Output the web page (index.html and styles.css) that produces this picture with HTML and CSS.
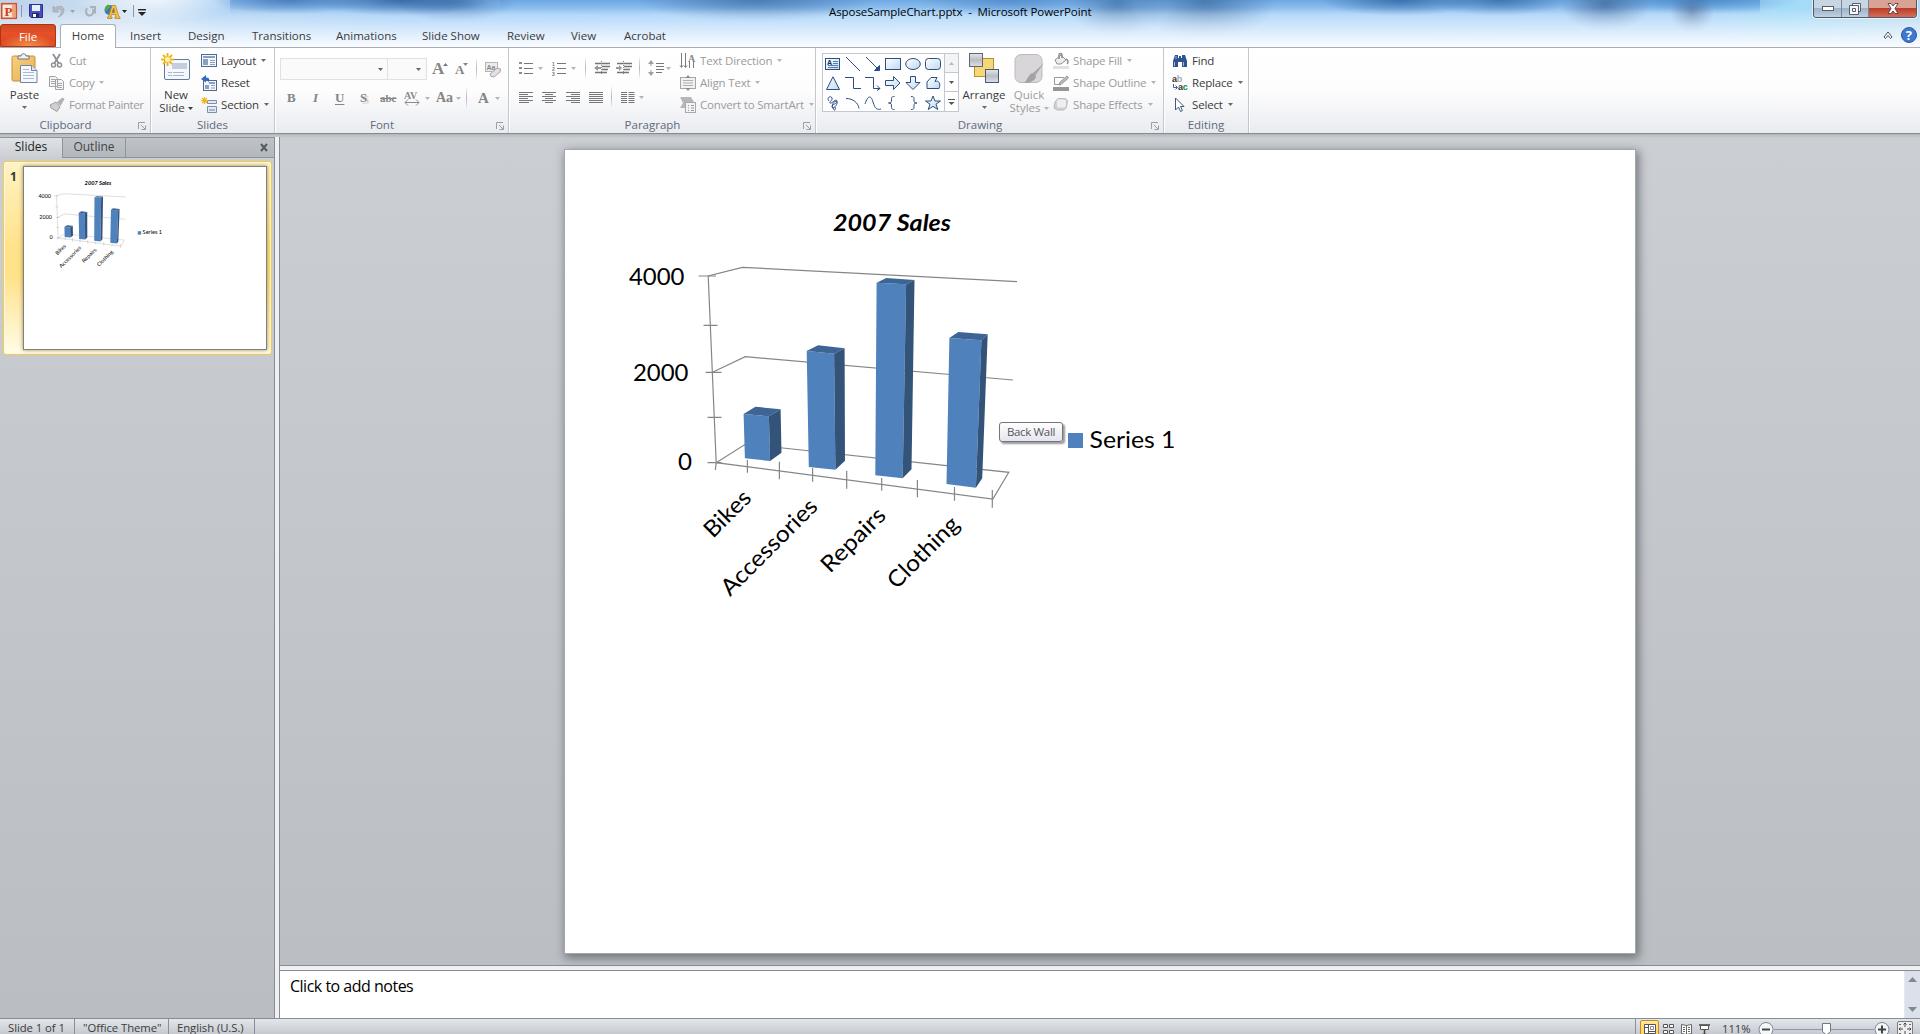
FILE: index.html
```html
<!DOCTYPE html>
<html lang="en">
<head>
<meta charset="utf-8">
<title>AsposeSampleChart.pptx - Microsoft PowerPoint</title>
<link rel="stylesheet" href="styles.css">
</head>
<body>
<svg class="defs" width="0" height="0">
  <defs>
    <linearGradient id="shape" x1="0" y1="0" x2="1" y2="1"><stop offset="0" stop-color="#fff"/><stop offset="1" stop-color="#bcd9f0"/></linearGradient>
    <linearGradient id="grey" x1="0" y1="0" x2="0" y2="1"><stop offset="0" stop-color="#e4e6ea"/><stop offset=".5" stop-color="#b9bec6"/><stop offset="1" stop-color="#dcdfe4"/></linearGradient>
    <linearGradient id="gold" x1="0" y1="0" x2="1" y2="1"><stop offset="0" stop-color="#f7cf82"/><stop offset="1" stop-color="#e8b04c"/></linearGradient>
    <symbol id="caret" viewBox="0 0 5 3"><path d="M0 0h5L2.500 3z" fill="currentColor"/></symbol>
    <symbol id="launch" viewBox="0 0 8 8"><path d="M.5 7V.5H7M3 3l4 4M7.500 3.500v4h-4" fill="none" stroke="#9a9ea6"/></symbol>
    <symbol id="chart" viewBox="565 150 1070 803">
      <g fill="none" stroke="#868686" stroke-width="1.200">
        <path d="M1017 281.700 742.300 267.300 708.200 276 716.200 462.700 992.800 499l16-26.700L745.700 444l-29.500 18.700M1013 380 745.300 356.700l-32.800 15.600M715.400 470l.8-8"/>
        <path d="M698.500 276H716M703.500 325.300h14M705.500 372.300h16M707.500 417.300h14M707.500 462.700h14"/>
        <path d="M747.400 460v12.700M779.400 461.700v17.600M812.600 468v13.700M846.700 470.700v18M881.700 478v12.700M917.400 480v17.300M954.500 487v13.700M992.300 490v17.700"/>
      </g>
      <g fill="#4f81bd">
        <path d="M743.600 414l25.300 2.300 1.200 44.700-25.200-2.700zM806.700 351l27.400 2.700 1.300 116-26.600-2.700zM876.600 282.700l29.500 1.600-3.400 194-27.400-3zM949.400 338l32 2.300-5.500 147.400-29.400-3.700z"/>
      </g>
      <g fill="#3c6494">
        <path d="M743.600 414l11.800-7.300 25.200 2.600-11.700 7zM806.700 351l11.400-5.700 26.500 3-10.500 5.400zM876.600 282.700l9.700-4.700 28.200 2-8.400 4.300zM949.400 338l8.900-6 29.400 2.300-6.300 6z"/>
      </g>
      <g fill="#335379">
        <path d="M768.900 416.300l11.700-7 .9 43.400-11.400 8.300zM834.100 353.700l10.500-5.400.4 112.400-9.600 9zM906.100 284.300l8.400-4.300-3 189.300-8.800 9zM981.400 340.300l6.300-6-5.500 144-6.300 9.400z"/>
      </g>
      <path d="M1068 433h15v15h-15z" fill="#4f81bd"/>
      <g class="chart-text">
        <text class="chart-title" x="833" y="230.500" textLength="118" lengthAdjust="spacingAndGlyphs">2007 Sales</text>
        <text x="629" y="284.500" textLength="55.500" lengthAdjust="spacingAndGlyphs">4000</text>
        <text x="633" y="380.500" textLength="55.500" lengthAdjust="spacingAndGlyphs">2000</text>
        <text x="678" y="469.500" textLength="14" lengthAdjust="spacingAndGlyphs">0</text>
        <text x="1089.500" y="447.500" textLength="86" lengthAdjust="spacingAndGlyphs">Series 1</text>
        <text transform="translate(713 539) rotate(-45)" textLength="56" lengthAdjust="spacingAndGlyphs">Bikes</text>
        <text transform="translate(730 597) rotate(-45)" textLength="126" lengthAdjust="spacingAndGlyphs">Accessories</text>
        <text transform="translate(830 574) rotate(-45)" textLength="81" lengthAdjust="spacingAndGlyphs">Repairs</text>
        <text transform="translate(896.500 590) rotate(-45)" textLength="91" lengthAdjust="spacingAndGlyphs">Clothing</text>
      </g>
    </symbol>
  </defs>
</svg>

<div class="app">
  <header class="titlebar">
    <div class="title-row">
      <div class="quick">
        <svg width="16" height="16" viewBox="0 0 16 16"><rect x=".7" y=".7" width="14.600" height="14.600" fill="#fbe9df" stroke="#d2502b" stroke-width="1.600"/><path d="M11 2h3v12h-3" fill="#f3a56f"/><text x="3.500" y="12.900" class="logo-letter">P</text></svg>
        <i class="qsep"></i>
        <svg class="save" width="14" height="14" viewBox="0 0 14 14"><path d="M.5.5h13v13H2L.5 12z" fill="#4a4fc0" stroke="#2a2f90"/><path d="M3 1h8v6H3z" fill="#e8f0fb"/><path d="M3 9h7v5H3z" fill="#23286f"/><path d="M4 10h3v3H4z" fill="#fff"/></svg>
        <svg class="undo" width="13" height="13" viewBox="0 0 13 13"><path d="M1 1v6h6L5 5c3-2 5 0 4 3-.5 2-2 3-3 4 4-1 6-4 6-7 0-4-5-5-9-2z" fill="#b4bac4" stroke="#9aa2af" stroke-width=".6"/></svg>
        <svg class="qcaret pale" width="5" height="3"><use href="#caret"/></svg>
        <svg class="redo" width="13" height="13" viewBox="0 0 13 13"><path d="M7 2h5v5l-1.700-1.500c.5 3-1.300 5-3.800 5C3 10.500 2 6 4 3" fill="none" stroke="#aab0b9" stroke-width="2"/></svg>
        <svg class="globe" width="17" height="15" viewBox="0 0 17 15"><circle cx="5.500" cy="6" r="5" fill="#3977bd"/><path d="M3 1c4-1 4 3 1 4L2 8 1 4z" fill="#54a944"/><path d="M8 1.500h3.500L15 13h1v1.500h-5V13h1l-.6-2.500H7.500L6.500 13H8v1.500H3.500V13h1zM8 8.500h3L9.700 4z" fill="#f5c242" stroke="#b27c1a" stroke-width=".7"/></svg>
        <svg class="qcaret dark" width="5" height="3"><use href="#caret"/></svg>
        <i class="qsep late"></i>
        <svg class="customize" width="8" height="7" viewBox="0 0 8 7"><path d="M0 .7h8" stroke="#222" stroke-width="1.400"/><path d="M0 3h8L4 7z" fill="#222"/></svg>
      </div>
      <div class="title">AsposeSampleChart.pptx&nbsp; -&nbsp; Microsoft PowerPoint</div>
      <div class="winbtns">
        <span><svg width="12" height="5"><rect x=".5" y=".5" width="11" height="4" fill="#fff" stroke="#565d6b"/></svg></span>
        <span class="max"><svg width="12" height="12" viewBox="0 0 12 12"><path d="M3.500.5h8v8h-2v3h-9v-9h3z" fill="#f7f8fa" stroke="#565d6b"/><path d="M3.500 5.500h3v3h-3zM2.500 2.500h7v7" fill="none" stroke="#565d6b"/></svg></span>
        <span class="close"><svg width="12" height="11" viewBox="0 0 12 11"><path d="M1 .5h3l2 2.500L8 .5h3L8 5.500l3 5H8L6 8l-2 2.500H1l3-5z" fill="#fff" stroke="#5c3a42" stroke-width=".9"/></svg></span>
      </div>
    </div>
    <nav class="tabs">
      <span class="file">File</span><span class="home">Home</span><span class="tab t-insert">Insert</span><span class="tab t-design">Design</span><span class="tab t-trans">Transitions</span><span class="tab t-anim">Animations</span><span class="tab t-show">Slide Show</span><span class="tab t-review">Review</span><span class="tab t-view">View</span><span class="tab t-acro">Acrobat</span>
      <span class="help"><svg width="10" height="8" viewBox="0 0 10 8"><path d="M1 6l4-5 4 5-1.500 1.500L5 4.500 2.500 7.500z" fill="#fff" stroke="#4a4f57"/></svg>
      <svg width="16" height="16" viewBox="0 0 16 16"><circle cx="8" cy="8" r="7.500" fill="#3f78cf" stroke="#2c59a4"/><text x="4.700" y="12.700" class="help-mark">?</text></svg></span>
    </nav>
  </header>

  <section class="ribbon">
    <div class="group g-clip">
      <div class="body">
        <div class="big paste">
          <svg width="28" height="31" viewBox="0 0 28 31"><rect x="1" y="3" width="23" height="25" rx="1.500" fill="url(#gold)" stroke="#c79035"/><path d="M7 6V3h3c0-3 5-3 5 0h3v3z" fill="#f0f2f5" stroke="#6f7680"/><path d="M9.500 12.500h11l5.500 5v12H9.500z" fill="#f6f8fc" stroke="#6d86a8"/><path d="M20.500 12.500v5H26" fill="#dbe4f0" stroke="#6d86a8"/><path d="M12 16.500h6M12 19.500h11M12 22.500h11M12 25.500h11" stroke="#a9bbd2"/></svg>
          <b>Paste</b><svg class="c" width="5" height="3"><use href="#caret"/></svg>
        </div>
        <div class="col off">
          <div class="cmd"><svg width="16" height="16" viewBox="0 0 16 16"><path d="M4 1l5.500 9M11 1L5.500 10" stroke="#8d9095" stroke-width="1.800"/><circle cx="4.500" cy="12" r="2" fill="none" stroke="#8d9095" stroke-width="1.500"/><circle cx="10.500" cy="12" r="2" fill="none" stroke="#8d9095" stroke-width="1.500"/></svg><b>Cut</b></div>
          <div class="cmd"><svg width="16" height="16" viewBox="0 0 16 16"><path d="M.5 1.500h6l2 2v8h-8zM6.500 4.500h6l2 2v8h-8z" fill="#f3f3f4" stroke="#a0a2a6"/><path d="M2 4.500h4M2 6.500h4M2 8.500h4M8 8.500h5M8 10.500h5M8 12.500h5" stroke="#a8aaae"/></svg><b>Copy</b><svg class="c" width="5" height="3"><use href="#caret"/></svg></div>
          <div class="cmd"><svg width="16" height="16" viewBox="0 0 16 16"><path d="M1 8l6-3 4 5-3 4.500L2 11z" fill="#cfcfd1" stroke="#9fa0a3"/><path d="M8 5l5.500-4.500L15.500 2l-4 7z" fill="#aeb0b3"/></svg><b>Format Painter</b></div>
        </div>
      </div>
      <div class="label with-launch">Clipboard<svg class="launch" width="8" height="8"><use href="#launch"/></svg></div>
    </div>

    <div class="group g-slides">
      <div class="body">
        <div class="big newslide">
          <svg width="30" height="31" viewBox="0 0 30 31"><rect x="3.500" y="6.500" width="25" height="20" rx="1.500" fill="#f5f8fc" stroke="#627c9f"/><path d="M11 10h15v6H11z" fill="#c4cedb"/><path d="M7 19.500h17M7 22.500h17" stroke="#a8b7cb" stroke-dasharray="4 1 11 1"/><path d="M6.500 0v13M0 6.500h13M2 2l9 9M11 2l-9 9" stroke="#f0b51c" stroke-width="2"/><circle cx="6.500" cy="6.500" r="2.500" fill="#fff7b0"/></svg>
          <b>New</b><b>Slide <svg width="5" height="3"><use href="#caret"/></svg></b>
        </div>
        <div class="col">
          <div class="cmd"><svg width="16" height="14" viewBox="0 0 16 14"><rect x=".5" y=".5" width="15" height="12" fill="#f3f6fa" stroke="#4c6a92"/><path d="M2 2h12v2H2zM2 5h5v6H2z" fill="#8aa0be"/><path d="M9 6.500h5M9 8.500h5M9 10.500h5" stroke="#8aa0be"/></svg><b>Layout</b><svg class="c" width="5" height="3"><use href="#caret"/></svg></div>
          <div class="cmd"><svg width="16" height="16" viewBox="0 0 16 16"><rect x="2.500" y="5.500" width="13" height="10" fill="#f3f6fa" stroke="#4c6a92"/><path d="M8 7h6v2H8zM4 10h4v4H4z" fill="#8aa0be"/><path d="M10 10.500h4M10 13h4" stroke="#8aa0be"/><path d="M0 4l5-4v2.500c4 0 4 3 2 5 .5-2-.5-2.500-2-2.500v2.500z" fill="#2d6bc4"/></svg><b>Reset</b></div>
          <div class="cmd"><svg width="16" height="16" viewBox="0 0 16 16"><path d="M6.500 3.500h9v3h-9zM6.500 9.500h9v6h-9z" fill="#e4eaf2" stroke="#7b90ad"/><path d="M8 12h6v2H8z" fill="#a9b9cd"/><path d="M3.500 0v7M0 3.500h7M1 1l5 5M6 1L1 6" stroke="#efb41c" stroke-width="1.200"/></svg><b>Section</b><svg class="c" width="5" height="3"><use href="#caret"/></svg></div>
        </div>
      </div>
      <div class="label">Slides</div>
    </div>

    <div class="group g-font">
      <div class="body rows">
        <div class="frow1">
          <span class="combo"><svg width="5" height="3"><use href="#caret"/></svg></span><span class="combo small"><svg width="5" height="3"><use href="#caret"/></svg></span>
          <span class="serif grow">A<svg width="5" height="3" viewBox="0 0 5 3"><path d="M0 3h5L2.500 0z" fill="#777"/></svg></span>
          <span class="serif shrink">A<svg width="5" height="3"><use href="#caret"/></svg></span>
          <i class="vs"></i>
          <svg width="17" height="17" viewBox="0 0 17 17"><rect x=".5" y="1.500" width="12" height="9" fill="#ececef" stroke="#b3b3ba"/><text x="1.500" y="9" class="mini">Aa</text><path d="M5 13l7-6 3.500 1-.5 3-6 5-3-.5z" fill="#e3dfe2" stroke="#a9a4aa"/></svg>
        </div>
        <div class="frow2">
          <span class="serif">B</span><span class="serif it">I</span><span class="serif un">U</span><span class="serif sh">S</span><span class="serif st">abc</span>
          <svg width="16" height="15" viewBox="0 0 16 15"><text x="0" y="8" class="av">AV</text><path d="M1 11.500h14M4 8.500l-3 3 3 3M12 8.500l3 3-3 3" fill="none" stroke="#8c8c8c"/></svg><svg class="c" width="5" height="3"><use href="#caret"/></svg>
          <span class="serif aa">Aa</span><svg class="c" width="5" height="3"><use href="#caret"/></svg><i class="vs"></i><span class="serif fc">A</span><svg class="c" width="5" height="3"><use href="#caret"/></svg>
        </div>
      </div>
      <div class="label with-launch">Font<svg class="launch" width="8" height="8"><use href="#launch"/></svg></div>
    </div>

    <div class="group g-para">
      <div class="body">
        <div class="rows para-left">
          <div class="prow1">
            <svg width="14" height="14" viewBox="0 0 14 14"><path d="M5 2.500h9M5 7.500h9M5 12.500h9" stroke="#777"/><path d="M0 1h3v2H0zM0 6h3v2H0zM0 11h3v2H0z" fill="#8d8d8d"/></svg><svg class="c" width="5" height="3"><use href="#caret"/></svg>
            <svg width="14" height="15" viewBox="0 0 14 15"><path d="M5 2.500h9M5 7.500h9M5 12.500h9" stroke="#777"/><text x="0" y="4.500" class="num">1</text><text x="0" y="9.500" class="num">2</text><text x="0" y="14.500" class="num">3</text></svg><svg class="c" width="5" height="3"><use href="#caret"/></svg><i class="vs"></i>
            <svg width="16" height="14" viewBox="0 0 16 14"><path d="M1 2.500h15M8 5.500h8M8 8.500h6M1 11.500h12" stroke="#757575" stroke-width="1.500"/><path d="M0 7l4-3v2h3v2H4v2z" fill="#999"/><path d="M7.500 0v14" stroke="#888" stroke-dasharray="1 1"/></svg>
            <svg width="16" height="14" viewBox="0 0 16 14"><path d="M1 2.500h15M8 5.500h8M8 8.500h6M1 11.500h12" stroke="#757575" stroke-width="1.500"/><path d="M6 7L3 4v2H0v2h3v2z" fill="#999"/><path d="M7.500 0v14" stroke="#888" stroke-dasharray="1 1"/></svg><i class="vs"></i>
            <svg width="16" height="16" viewBox="0 0 16 16"><path d="M3 1v5M3 10v5" stroke="#999"/><path d="M0 4l3-4 3 4zM0 12l3 4 3-4z" fill="#a0a0a0"/><path d="M8 3.500h8M8 6.500h8M8 9.500h8M8 12.500h6" stroke="#777"/></svg><svg class="c" width="5" height="3"><use href="#caret"/></svg>
          </div>
          <div class="prow2">
            <svg width="14" height="11" viewBox="0 0 14 11"><path d="M0 .5h14M0 2.500h9M0 4.500h14M0 6.500h9M0 8.500h14M0 10.500h10" stroke="#777"/></svg>
            <svg width="14" height="11" viewBox="0 0 14 11"><path d="M0 .5h14M3 2.500h8M0 4.500h14M3 6.500h8M0 8.500h14M3 10.500h8" stroke="#777"/></svg>
            <svg width="14" height="11" viewBox="0 0 14 11"><path d="M0 .5h14M5 2.500h9M0 4.500h14M5 6.500h9M0 8.500h14M5 10.500h9" stroke="#777"/></svg>
            <svg width="14" height="11" viewBox="0 0 14 11"><path d="M0 .5h14M0 2.500h14M0 4.500h14M0 6.500h14M0 8.500h14M0 10.500h14" stroke="#777"/></svg><i class="vs"></i>
            <svg width="13" height="11" viewBox="0 0 13 11"><path d="M0 .5h6M0 2.500h6M0 4.500h6M0 6.500h6M0 8.500h6M0 10.500h6M7.500.5h6M7.500 2.500h6M7.500 4.500h6M7.500 6.500h6M7.500 8.500h6M7.500 10.500h6" stroke="#777"/></svg><svg class="c" width="5" height="3"><use href="#caret"/></svg>
          </div>
        </div>
        <div class="col off">
          <div class="cmd"><svg width="16" height="16" viewBox="0 0 16 16"><path d="M1.500 0v14M5.500 0v14M9.500 8v7M13.500 8v7M0 12.500l1.500 2 1.500-2M4 12.500l1.500 2 1.500-2" stroke="#7b7b7b" fill="none"/><text x="8" y="8.500" class="av big-a">A</text></svg><b>Text Direction</b><svg class="c" width="5" height="3"><use href="#caret"/></svg></div>
          <div class="cmd"><svg width="16" height="16" viewBox="0 0 16 16"><rect x=".5" y="2.500" width="15" height="11" fill="#f1f1f2" stroke="#a6a6a8"/><path d="M3 5.500h10M3 8h10M3 10.500h10" stroke="#b0b0b2"/><path d="M5.500 3L8 0l2.500 3zM5.500 13L8 16l2.500-3z" fill="#8b8b8d"/></svg><b>Align Text</b><svg class="c" width="5" height="3"><use href="#caret"/></svg></div>
          <div class="cmd"><svg width="16" height="16" viewBox="0 0 16 16"><path d="M0 0h11l3 5-4 6H0l3-5z" fill="#b6b6b9"/><rect x="5.500" y="5.500" width="10" height="10" fill="#f3f3f4" stroke="#a9a9ac"/><path d="M8 8.500h1M11 8.500h3M8 11h1M11 11h3M8 13.500h1M11 13.500h3" stroke="#98989b"/></svg><b>Convert to SmartArt</b><svg class="c" width="5" height="3"><use href="#caret"/></svg></div>
        </div>
      </div>
      <div class="label with-launch">Paragraph<svg class="launch" width="8" height="8"><use href="#launch"/></svg></div>
    </div>

    <div class="group g-draw">
      <div class="body">
        <div class="gallery">
          <div class="shapes">
            <svg viewBox="0 0 16 14"><rect x=".5" y="1.500" width="14" height="11" fill="url(#shape)" stroke="#2c4d82"/><text x="2" y="8" class="tb">A</text><path d="M8 4.500h5M8 6.500h5M3 8.500h10M3 10.500h10" stroke="#5c7cab"/></svg>
            <svg viewBox="0 0 16 14"><path d="M1 0l14 14"/></svg>
            <svg viewBox="0 0 16 14"><path d="M1 0l13 13M14.500 8.500v5h-5z" fill="#2c4d82"/></svg>
            <svg viewBox="0 0 16 14"><rect x=".5" y="1.500" width="15" height="11" fill="url(#shape)"/></svg>
            <svg viewBox="0 0 16 14"><ellipse cx="8" cy="7" rx="7.300" ry="5.500" fill="url(#shape)"/></svg>
            <svg viewBox="0 0 16 14"><rect x=".5" y="1.500" width="15" height="11" rx="3" fill="url(#shape)"/></svg>
            <svg viewBox="0 0 16 14"><path d="M8 .8l6.500 12.700h-13z" fill="url(#shape)"/></svg>
            <svg viewBox="0 0 16 14"><path d="M0 1.500h8.500v11H16"/></svg>
            <svg viewBox="0 0 16 14"><path d="M0 1.500h8.500v11H15M12 9.500l3 3-3 2"/></svg>
            <svg viewBox="0 0 16 14"><path d="M.5 4.500h8v-4l6.500 6.500-6.500 6.500v-4h-8z" fill="url(#shape)"/></svg>
            <svg viewBox="0 0 16 14"><path d="M5.500.5h5v6H15l-7 7-7-7h4.500z" fill="url(#shape)"/></svg>
            <svg viewBox="0 0 16 14"><path d="M2 12.500V6l4-4.500h6L10 5.500c4-1.500 6 2 4 7z" fill="url(#shape)"/></svg>
            <svg viewBox="0 0 16 14"><path d="M4 5C1 2 6-1 7 2S3 6 5 7s6-5 7-2-6 3-5 6 6-3 5-5-6 1-4 6 3 0 2-1"/></svg>
            <svg viewBox="0 0 16 14"><path d="M1 2.500c7 0 12 4 13 10"/></svg>
            <svg viewBox="0 0 16 14"><path d="M0 8C3-1 6-1 8 6s4 8 8 7"/></svg>
            <svg viewBox="0 0 16 14"><path d="M9.500.5c-3 0-3 1-3 3.500S6 7 3.500 7C6 7 6.500 7.500 6.500 10s0 3.500 3 3.500"/></svg>
            <svg viewBox="0 0 16 14"><path d="M6 .5c3 0 3 1 3 3.500S9.500 7 12 7C9.500 7 9 7.500 9 10s0 3.500-3 3.500"/></svg>
            <svg viewBox="0 0 16 14"><path d="M8 0l2 5h5.500L11 8.200l1.800 5.300L8 10.400l-4.800 3.100L5 8.200.5 5H6z" fill="url(#shape)"/></svg>
          </div>
          <div class="gbtns"><span class="dim"><svg width="5" height="3" viewBox="0 0 5 3"><path d="M0 3h5L2.500 0z" fill="#b5bac1"/></svg></span><span><svg width="5" height="3"><use href="#caret"/></svg></span><span><svg width="7" height="6" viewBox="0 0 7 6"><path d="M0 .5h7" stroke="#555"/><path d="M.5 3h6l-3 3z" fill="#555"/></svg></span></div>
        </div>
        <div class="big arrange">
          <svg width="30" height="31" viewBox="0 0 30 31"><rect x="5.500" y="5.500" width="19" height="18" fill="#f6d777" stroke="#b98f2b"/><rect x=".5" y=".5" width="13" height="13" fill="url(#grey)" stroke="#5e6671"/><rect x="16.500" y="16.500" width="13" height="13" fill="url(#grey)" stroke="#44597a"/></svg>
          <b>Arrange</b><svg class="c" width="5" height="3"><use href="#caret"/></svg>
        </div>
        <div class="big quickst off">
          <svg width="31" height="31" viewBox="0 0 31 31"><rect x="1" y="1.500" width="27" height="28" rx="6" fill="#d9d6da" stroke="#bdbabf"/><path d="M30 10l-9 13-3-2z" fill="#a7a7aa"/><path d="M18 20l4 3c0 4-5 7-12 7 3-2 4-8 8-10z" fill="#a4a1a5"/></svg>
          <b>Quick</b><b>Styles <svg width="5" height="3"><use href="#caret"/></svg></b>
        </div>
        <div class="col off">
          <div class="cmd"><svg width="16" height="16" viewBox="0 0 16 16"><path d="M2 7l6-5 5 5-5 4H4z" fill="#ededee" stroke="#8f8f92"/><path d="M6 6V2c0-2 3-2 3 0v3M13 6c3 1 2 4 1 5" fill="none" stroke="#8f8f92" stroke-width="1.500"/><path d="M0 13h16v3H0z" fill="#e3dfe2"/></svg><b>Shape Fill</b><svg class="c" width="5" height="3"><use href="#caret"/></svg></div>
          <div class="cmd"><svg width="16" height="16" viewBox="0 0 16 16"><path d="M11 2.500H1.500v7H8" fill="none" stroke="#999"/><path d="M6 10l1-3 7-6 1.500 2-7 6z" fill="#bbb" stroke="#888" stroke-width=".8"/><path d="M0 12h16v4H0z" fill="#969698"/></svg><b>Shape Outline</b><svg class="c" width="5" height="3"><use href="#caret"/></svg></div>
          <div class="cmd"><svg width="16" height="16" viewBox="0 0 16 16"><path d="M5 1.500h7l2.500 2-1 7-3 2.500H4L1 11l1-6z" fill="#d2d0d4" stroke="#bbb9bd"/><rect x="4" y="2.500" width="9" height="8" rx="2" fill="#efedef"/></svg><b>Shape Effects</b><svg class="c" width="5" height="3"><use href="#caret"/></svg></div>
        </div>
      </div>
      <div class="label with-launch">Drawing<svg class="launch" width="8" height="8"><use href="#launch"/></svg></div>
    </div>

    <div class="group g-edit">
      <div class="body">
        <div class="col">
          <div class="cmd"><svg width="16" height="14" viewBox="0 0 16 14"><path d="M3 1h3v3h1V2h2v2h1V1h3l2 6v6h-5V8H6v5H1V7z" fill="#2d5391"/><path d="M2.500 8v4M11.500 8v4M4 2v3" stroke="#9db8e0"/></svg><b>Find</b></div>
          <div class="cmd"><svg width="16" height="16" viewBox="0 0 16 16"><text x="0" y="7" class="rep">a<tspan fill="#aaa">b</tspan></text><text x="6" y="15" class="rep">a<tspan fill="#208a2d">c</tspan></text><path d="M1.500 9v3.500H5M3.500 10.500l2 2-2 2" fill="none" stroke="#3367ad"/></svg><b>Replace</b><svg class="c" width="5" height="3"><use href="#caret"/></svg></div>
          <div class="cmd"><svg width="16" height="16" viewBox="0 0 16 16"><path d="M3.500 1v12l3-3 2 4.500 2-1-2-4h3.500z" fill="#fff" stroke="#44597a"/></svg><b>Select</b><svg class="c" width="5" height="3"><use href="#caret"/></svg></div>
        </div>
      </div>
      <div class="label">Editing</div>
    </div>
  </section>

  <main class="work">
    <aside class="panel">
      <div class="ptabs"><span class="on">Slides</span><span class="outline">Outline</span><span class="rest"><svg width="8" height="7" viewBox="0 0 8 7"><path d="M1 0l6 7M7 0L1 7" stroke="#555a60" stroke-width="2"/></svg></span></div>
      <div class="thumb"><b>1</b><svg class="mini-slide"><use href="#chart"/></svg></div>
    </aside>
    <div class="vsplit"></div>
    <div class="right">
      <div class="stage">
        <div class="slide">
          <svg width="1070" height="803"><use href="#chart"/></svg>
          <div class="tip">Back Wall</div>
        </div>
      </div>
      <div class="hsplit"></div>
      <div class="notes"><p>Click to add notes</p><div class="scroll"><svg width="9" height="5"><path d="M0 5h9L4.500 0z" fill="#7f8b8e"/></svg><svg width="9" height="5"><path d="M0 0h9L4.500 5z" fill="#7f8b8e"/></svg></div></div>
    </div>
  </main>

  <footer class="status">
    <span class="s1">Slide 1 of 1</span><span class="s2">"Office Theme"</span><span class="s3">English (U.S.)</span>
    <div class="views">
      <span class="normal"><svg width="12" height="10" viewBox="0 0 12 10"><path d="M.5.5h11v9H.5z" fill="#fff" stroke="#555"/><path d="M4.500 0v10M5 7.500h7M1 3.500h3" stroke="#555"/><path d="M6.500 2.500h3v3h-3z" fill="#fff" stroke="#888"/></svg></span>
      <svg width="11" height="10" viewBox="0 0 11 10"><path d="M.5.5h4v3h-4zM6.500.5h4v3h-4zM.5 6.500h4v3h-4zM6.500 6.500h4v3h-4z" fill="#fff" stroke="#555"/></svg>
      <svg width="11" height="11" viewBox="0 0 11 11"><path d="M5.500 1.500l-5-1v9l5 1 5-1v-9zv9M2 3.500h2M2 5.500h2M2 7.500h2M7 3.500h2M7 5.500h2M7 7.500h2" fill="#fff" stroke="#666"/></svg>
      <svg width="11" height="11" viewBox="0 0 11 11"><path d="M0 1h11M5.500 6v4M3 10.500h5" stroke="#444" stroke-width="1.500"/><path d="M1.500 1.500h8v4h-8z" fill="#fff" stroke="#555"/></svg>
      <span class="pct">111%</span>
      <svg width="132" height="17" viewBox="0 0 132 17"><path d="M16 8.500h100" stroke="#8d98a8"/><circle cx="8" cy="8.500" r="7" fill="#f5f6f8" stroke="#7b8796"/><path d="M4 8.500h8" stroke="#444" stroke-width="2"/><circle cx="124" cy="8.500" r="7" fill="#f5f6f8" stroke="#7b8796"/><path d="M120 8.500h8M124 4.500v8" stroke="#444" stroke-width="2"/><path d="M64.500 2.500h8v8l-4 3.500-4-3.500z" fill="#fff" stroke="#6f7988"/></svg>
      <svg width="16" height="16" viewBox="0 0 16 16"><rect x=".5" y=".5" width="15" height="15" rx="1.500" fill="#eee" stroke="#777d86"/><path d="M8 2v4M8 10v4M2 8h4M10 8h4M6.500 3.500L8 2l1.500 1.500M3.500 6.500L2 8l1.500 1.500M12.500 6.500L14 8l-1.500 1.500" fill="none" stroke="#444"/><path d="M2 3.500h2M12 3.500h2M2 12.500h2M12 12.500h2" stroke="#666"/></svg>
    </div>
  </footer>
</div>
</body>
</html>
```
FILE: styles.css
```css
* { box-sizing: border-box; }
body { margin: 0; overflow: hidden; font: 11.5px "Open Sans", "Noto Sans", sans-serif; color: #3b3b3b; }
.defs { position: absolute; }
svg { display: block; flex: none; overflow: visible; }
b { font-weight: 400; }
.app { width: 1920px; height: 1034px; display: flex; flex-direction: column; overflow: hidden; background: #fff; }

/* title bar */
.titlebar {
  height: 48px; flex: none; border-bottom: 1px solid #a9aeb6; display: flex; flex-direction: column;
  background:
    linear-gradient(to bottom, transparent 8px, rgba(244,249,255,.6) 29px, #f8fbff 46px),
    radial-gradient(ellipse 80px 22px at 155px 0, rgba(240,247,253,.9), rgba(240,247,253,0)),
    radial-gradient(ellipse 80px 14px at 290px 0, rgba(50,105,175,.7), rgba(50,105,175,0)),
    radial-gradient(ellipse 90px 16px at 400px 0, rgba(35,85,150,.75), rgba(35,85,150,0)),
    radial-gradient(ellipse 60px 20px at 455px 2px, rgba(45,95,155,.55), rgba(45,95,155,0)),
    radial-gradient(ellipse 120px 22px at 755px 0, rgba(45,95,150,.6), rgba(45,95,150,0)),
    radial-gradient(ellipse 90px 18px at 1010px 0, rgba(50,110,180,.45), rgba(50,110,180,0)),
    radial-gradient(ellipse 50px 34px at 1118px 4px, rgba(45,90,145,.55), rgba(45,90,145,0)),
    radial-gradient(ellipse 70px 40px at 1205px 2px, rgba(45,90,145,.6), rgba(45,90,145,0)),
    radial-gradient(ellipse 80px 16px at 1400px 0, rgba(35,90,155,.7), rgba(35,90,155,0)),
    radial-gradient(ellipse 70px 16px at 1500px 0, rgba(35,90,155,.65), rgba(35,90,155,0)),
    radial-gradient(ellipse 45px 28px at 1605px 4px, rgba(50,90,140,.65), rgba(50,90,140,0)),
    radial-gradient(ellipse 22px 22px at 1692px 12px, rgba(70,100,140,.6), rgba(70,100,140,0)),
    radial-gradient(ellipse 100px 14px at 1700px 0, rgba(35,110,180,.5), rgba(35,110,180,0)),
    linear-gradient(rgba(80,145,215,.65), rgba(80,145,215,0) 15px) 500px 0 / 1260px 48px no-repeat,
    linear-gradient(rgba(80,145,215,.5), rgba(80,145,215,0) 15px) 230px 0 / 270px 48px no-repeat,
    linear-gradient(90deg, #bdd3ea 0, #cfe0f1 140px, #b0d3f4 220px, #a3cff7 400px, #a8d3f9 900px, #a8d2f8 1700px, #a3dcf8 1790px, #b8d8ee 1920px);
}
.title-row { height: 24px; display: grid; grid-template-columns: 829px 1fr 106px; }
.quick { display: flex; align-items: center; padding: 0 0 2px 1px; height: 24px; }
.logo-letter { font: bold 13px "Liberation Serif", serif; fill: #c8401c; }
.qsep { width: 1px; height: 12px; background: #8e9aa8; margin-left: 4px; }
.qsep.late { margin-left: 6px; }
.save { margin-left: 7px; }
.undo { margin-left: 9px; }
.qcaret { color: #222; }
.qcaret.dark { margin-left: 1px; }
.qcaret.pale { margin-left: 5px; color: #9aa4b1; }
.redo { margin-left: 8px; }
.globe { margin-left: 8px; }
.customize { margin: 2px 0 0 4px; }
.title { font-size: 11.500px; line-height: 24px; color: #000; letter-spacing: -.08px; white-space: nowrap; }
.winbtns { height: 18px; width: 104px; margin-left: -1px; display: grid; grid-template-columns: 28px 27px 1fr; border: 1px solid #4e5866; border-top: 0; border-radius: 0 0 4px 4px; overflow: hidden; box-shadow: 0 0 0 1px rgba(255,255,255,.6); }
.winbtns span { display: flex; align-items: center; justify-content: center; background: linear-gradient(#c8d6e3 0 45%, #9db3c8 50%, #bfd2e2); border-right: 1px solid #7b8796; }
.winbtns .close { border: 0; background: linear-gradient(#d8a294 0 45%, #bd3d27 50%, #d2705a); }
.tabs { height: 24px; display: flex; line-height: 24px; font-size: 11.500px; white-space: nowrap; }
.file { width: 56px; height: 23px; line-height: 23px; text-align: center; color: #fff; background: radial-gradient(ellipse 30px 12px at 50% 100%, #f2914a, rgba(242,145,74,0)), linear-gradient(#cf4a24, #e5502a 40%, #d9431c); border: 1px solid #b03414; border-radius: 3px 3px 0 0; }
.home { width: 56px; height: 24px; margin: 0 14px 0 4px; text-align: center; background: #fff; border: 1px solid #a9aeb6; border-bottom: 0; border-radius: 3px 3px 0 0; line-height: 22px; }
.tab { flex: none; }
.t-insert { width: 58px; } .t-design { width: 64px; } .t-trans { width: 84px; } .t-anim { width: 86px; } .t-show { width: 85px; } .t-review { width: 64px; } .t-view { width: 53px; }
.help { margin-left: auto; display: flex; align-items: center; gap: 8px; padding: 0 3px 2px 0; height: 24px; }
.help-mark { font: bold 13px "Open Sans", sans-serif; fill: #fff; }

/* ribbon */
.ribbon { height: 86px; flex: none; display: flex; background: linear-gradient(#fff 0, #fdfdfe 50%, #e9ebef 100%); border-bottom: 1px solid #868b92; }
.group { display: flex; flex-direction: column; border-right: 1px solid #c3c7ce; box-shadow: 1px 0 #fff; }
.g-clip { width: 151px; } .g-slides { width: 124px; } .g-font { width: 234px; } .g-para { width: 307px; } .g-draw { width: 348px; } .g-edit { width: 85px; }
.body { height: 69px; display: flex; padding-top: 2px; }
.label { height: 16px; line-height: 15px; color: #5f6b7c; display: flex; justify-content: center; position: relative; }
.with-launch { padding-right: 19px; }
.launch { position: absolute; right: 4px; top: 5px; }
.col { display: flex; flex-direction: column; white-space: nowrap; letter-spacing: -.18px; }
.cmd { height: 22px; display: flex; align-items: center; }
.cmd > svg:first-child { margin-right: 4px; }
.cmd b { padding-bottom: 1px; }
.c { margin-left: 5px; color: #6a6a6a; }
.cmd .c { margin-top: -2px; }
.off { color: #9b9b9b; }
.off .c, .off b svg { color: #b4b4b4; }
.g-clip .off { letter-spacing: -.4px; }
.big { display: flex; flex-direction: column; align-items: center; line-height: 13px; padding-top: 3px; white-space: nowrap; }
.big > svg:first-child { margin-bottom: 4px; }
.big .c { margin: 5px 0 0; }
.big b svg { display: inline-block; vertical-align: 2px; }
.paste { width: 49px; }
.newslide { width: 50px; }
.serif { font: bold 13px/20px "Liberation Serif", serif; color: #858585; white-space: nowrap; }
.it { font-style: italic; padding-left: 2px; }
.un { text-decoration: underline; text-underline-offset: 2px; }
.sh { text-shadow: 2px 2px 1px #ccc; }
.st { text-decoration: line-through; font-size: 11px; }
.aa { font-size: 14px; }
.fc { font-size: 15px; line-height: 15px; }
.vs { width: 1px; height: 20px; background: linear-gradient(#eceef0, #b4b8be, #eceef0); }
.g-font .body { flex-direction: column; padding: 10px 0 0 5px; }
.frow1 { height: 22px; display: grid; grid-template-columns: 107px 41px 27px 21px 9px 20px; align-items: center; }
.combo { height: 22px; border: 1px solid #dfe1e5; background: #fafafb; display: flex; align-items: center; justify-content: flex-end; padding-right: 4px; color: #666; margin-right: -1px; }
.combo.small { padding-right: 5px; margin-right: 1px; }
.grow, .shrink { display: flex; height: 22px; line-height: 22px; }
.grow { font-size: 17px; padding-left: 4px; } .shrink { font-size: 13px; line-height: 24px; }
.grow svg, .shrink svg { margin: 5px 0 0 -1px; }
.frow2 { height: 22px; margin-top: 7px; display: grid; align-items: center; grid-template-columns: 24px 24px 25px 20px 24px 16px 16px 15px 15px 12px 12px 10px; padding-left: 7px; }
.frow2 .c, .prow1 .c, .prow2 .c { color: #b4b4b4; margin-top: 0; }
.mini { font: bold 7px "Liberation Sans", sans-serif; fill: #888; }
.av { font: bold 10px "Liberation Serif", serif; fill: #888; }
.num { font: bold 5px "Liberation Sans", sans-serif; fill: #777; }
.tb { font: bold 7px "Liberation Sans", sans-serif; fill: #1b2b4a; stroke: none; }
.rep { font: bold 9px "Liberation Sans", sans-serif; fill: #333; }
.para-left { width: 170px; padding-left: 10px; }
.prow1 { height: 22px; margin-top: 7px; display: grid; align-items: center; grid-template-columns: 14px 19px 14px 19px 9px 22px 23px 9px 16px 10px; }
.prow1 .c { margin-left: 5px; }
.prow1 .c:last-child { margin-left: 2px; }
.prow2 { height: 22px; margin-top: 7px; display: grid; align-items: center; grid-template-columns: 23px 24px 23px 22px 10px 13px 10px; }
.gallery { width: 137px; height: 59px; margin: 3px 0 0 6px; border: 1px solid #c3c8d0; display: flex; background: #fff; }
.shapes { width: 121px; display: grid; grid-template-columns: repeat(6, 20px); grid-template-rows: repeat(3, 19.500px); align-items: center; justify-items: center; }
.shapes svg { width: 16px; height: 14px; fill: none; stroke: #2c4d82; stroke-width: 1; }
.gbtns { flex: 1; display: grid; grid-template-rows: 1fr 1fr 1fr; border-left: 1px solid #c3c8d0; }
.gbtns span { display: flex; align-items: center; justify-content: center; border-bottom: 1px solid #c3c8d0; color: #555; }
.gbtns span:last-child { border: 0; }
.gbtns .dim { background: #f3f4f6; }
.arrange { width: 50px; }
.quickst { width: 40px; margin-right: 4px; }
.g-para .body > .col { margin-left: 1px; }
.g-edit .col { padding-left: 8px; }

/* work area */
.work { flex: none; height: 884px; display: flex; background: linear-gradient(#b3b7bc 0, #cbced3 4px, #babdc1 100%); }
.panel { width: 274px; padding-top: 3px; }
.ptabs { height: 21px; display: flex; line-height: 18px; font-size: 12px; color: #3f444a; }
.on { width: 62px; text-align: center; background: linear-gradient(#dfe3e7, #cbcfd4); border-top: 1px solid #8b959b; color: #222; }
.ptabs .outline { width: 64px; text-align: center; border: 1px solid #8b959b; }
.ptabs .outline, .rest { background: linear-gradient(#bfc3c8, #b3b8bc); border-top: 1px solid #8b959b; border-bottom: 1px solid #8b959b; }
.rest { flex: 1; display: flex; justify-content: flex-end; align-items: center; padding-right: 6px; }
.thumb { width: 269px; height: 194px; margin: 3px 0 0 3px; border: 1px solid #f2cb4f; border-radius: 3px; box-shadow: inset 0 0 0 1px #fff8dc; background: linear-gradient(#fff3c4, #ffe28a 45%, #ffe28a 60%, #fffce8 100%); display: flex; padding: 4px 0 0 6px; }
.thumb b { width: 13px; font-weight: 700; font-size: 12px; line-height: 22px; color: #333; }
.mini-slide { width: 244px; height: 184px; background: #fff; border: 1px solid #7f7f7f; box-shadow: 0 0 4px rgba(90,70,0,.6); }
.vsplit { width: 6px; background: #eef0f3; border: 1px solid #868d94; border-width: 0 1px; margin-top: 3px; }
.right { flex: 1; display: flex; flex-direction: column; }
.stage { height: 832px; padding: 16px 0 0 285px; border-bottom: 1px solid #868d94; }
.slide { width: 1070px; height: 803px; background: #fff; position: relative; box-shadow: 0 0 0 1px #a3a8ae, 2px 3px 9px 2px rgba(60,66,74,.6); }
.chart-text { font: 23px Lato, "Open Sans", sans-serif; fill: #000; }
.chart-title { font-weight: 700; font-style: italic; }
.tip { position: absolute; left: 434px; top: 272px; width: 64px; height: 20px; line-height: 18px; text-align: center; font-size: 11.500px; letter-spacing: -.35px; color: #575757; border: 1px solid #767676; border-radius: 3px; background: linear-gradient(#fff, #e4e5f0); box-shadow: 2px 2px 2px rgba(0,0,0,.4); }
.hsplit { height: 4px; background: #eef0f3; }
.notes { height: 48px; border-top: 1px solid #868d94; background: #fff; display: flex; justify-content: space-between; }
.notes p { margin: 6px 0 0 10px; font: 16px/18px "Open Sans", sans-serif; color: #000; letter-spacing: -.5px; }
.scroll { width: 16px; background: #dbe0ea; border-left: 1px solid #e5e8ee; display: flex; flex-direction: column; justify-content: space-between; align-items: center; padding: 6px 0; }

/* status bar */
.status { height: 16px; flex: none; border-top: 1px solid #868d94; background: linear-gradient(#e3e6ea, #c6cad0); display: flex; line-height: 18px; white-space: nowrap; font-size: 11.300px; letter-spacing: -.05px; }
.status > span { border-right: 1px solid #8b9098; height: 16px; padding-left: 8px; }
.s1 { width: 75px; } .s2 { width: 94px; } .s3 { width: 86px; }
.views { margin-left: auto; display: flex; padding-right: 5px; height: 20px; align-items: center; gap: 7px; border-left: 1px solid #8b9098; padding-left: 4px; width: 285px; }
.views .normal { width: 19px; height: 18px; background: linear-gradient(#ffe79a, #ffd150); border: 1px solid #c28a2a; border-radius: 2px; display: flex; align-items: center; justify-content: center; margin-right: -3px; }
.pct { margin-left: 5px; width: 29px; }
```
